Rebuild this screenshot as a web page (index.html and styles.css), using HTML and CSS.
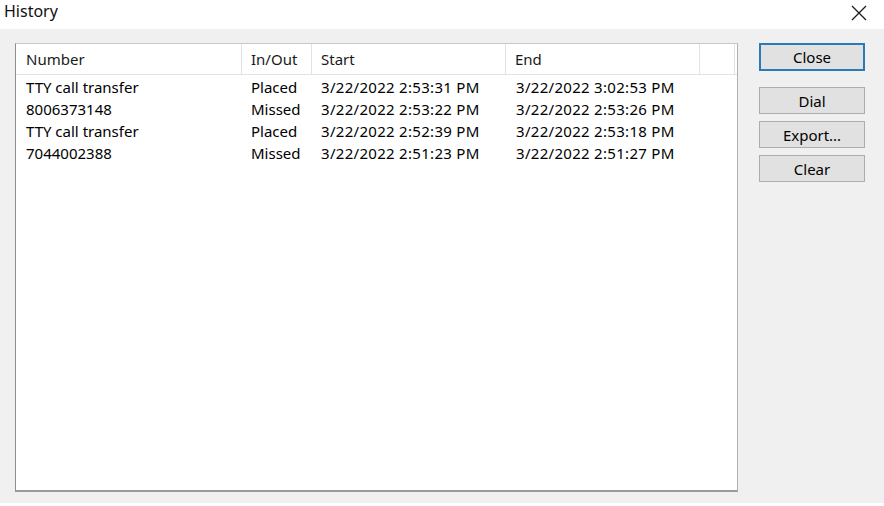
FILE: index.html
```html
<!DOCTYPE html>
<html>
<head>
<meta charset="utf-8">
<link rel="stylesheet" href="styles.css">
</head>
<body>
<div class="window">
  <div class="titlebar">
    <span class="title">History</span>
    <svg class="close-x" width="16" height="16" viewBox="0 0 16 16"><path d="M1 1 L15 15 M15 1 L1 15" stroke="#1a1a1a" stroke-width="1.3" fill="none"/></svg>
  </div>
  <div class="client">
    <div class="list">
      <div class="row header">
        <div class="cell c1">Number</div>
        <div class="cell c2">In/Out</div>
        <div class="cell c3">Start</div>
        <div class="cell c4">End</div>
        <div class="cell c5"></div>
      </div>
      <div class="rows">
        <div class="row">
          <div class="cell c1">TTY call transfer</div>
          <div class="cell c2">Placed</div>
          <div class="cell c3">3/22/2022 2:53:31 PM</div>
          <div class="cell c4">3/22/2022 3:02:53 PM</div>
        </div>
        <div class="row">
          <div class="cell c1">8006373148</div>
          <div class="cell c2">Missed</div>
          <div class="cell c3">3/22/2022 2:53:22 PM</div>
          <div class="cell c4">3/22/2022 2:53:26 PM</div>
        </div>
        <div class="row">
          <div class="cell c1">TTY call transfer</div>
          <div class="cell c2">Placed</div>
          <div class="cell c3">3/22/2022 2:52:39 PM</div>
          <div class="cell c4">3/22/2022 2:53:18 PM</div>
        </div>
        <div class="row">
          <div class="cell c1">7044002388</div>
          <div class="cell c2">Missed</div>
          <div class="cell c3">3/22/2022 2:51:23 PM</div>
          <div class="cell c4">3/22/2022 2:51:27 PM</div>
        </div>
      </div>
    </div>
    <div class="buttons">
      <button class="btn default">Close</button>
      <button class="btn gap">Dial</button>
      <button class="btn">Export...</button>
      <button class="btn">Clear</button>
    </div>
  </div>
</div>
</body>
</html>
```
FILE: styles.css
```css
html, body {
  margin: 0;
  padding: 0;
  background: #ffffff;
}
body {
  font-family: "Noto Sans", "Open Sans", sans-serif;
  font-size: 15px;
  color: #000;
}
.window {
  width: 884px;
  height: 506px;
  display: flex;
  flex-direction: column;
}
.titlebar {
  height: 29px;
  background: #fff;
  display: flex;
  align-items: center;
  justify-content: space-between;
  padding: 0 17px 0 4px;
  box-sizing: border-box;
}
.title {
  font-size: 16px;
  color: #111;
  position: relative;
  top: -4px;
}
.close-x {
  position: relative;
  top: -2px;
}
.client {
  height: 474px;
  background: #f0f0f0;
  display: flex;
  padding: 14px 0 0 15px;
  box-sizing: border-box;
}
.list {
  width: 723px;
  height: 449px;
  box-sizing: border-box;
  background: #fff;
  border-left: 1px solid #8e8e8e;
  border-top: 1px solid #c8c8c8;
  border-right: 1px solid #b0b0b0;
  border-bottom: 2px solid #9a9a9a;
}
.row {
  display: flex;
  height: 22px;
  line-height: 22px;
}
.row.header {
  height: 31px;
  line-height: 31px;
  border-bottom: 1px solid #e3e3e3;
  box-sizing: border-box;
  color: #1a1a1a;
}
.rows {
  padding-top: 1px;
}
.cell {
  box-sizing: border-box;
  white-space: nowrap;
  padding-left: 10px;
}
.rows .c3, .rows .c4 {
  letter-spacing: 0.3px;
}
.header .cell {
  border-right: 1px solid #e3e3e3;
  padding-left: 9px;
}
.header .c1 { padding-left: 10px; }
.c1 { width: 226px; }
.c2 { width: 70px; padding-left: 9px; }
.c3 { width: 194px; padding-left: 9px; }
.c4 { width: 194px; padding-left: 10px; }
.c5 { width: 35px; }
.buttons {
  display: flex;
  flex-direction: column;
  margin-left: 21px;
  gap: 7px;
}
.btn {
  width: 106px;
  height: 27px;
  background: #e1e1e1;
  border: 1px solid #adadad;
  font-family: "Noto Sans", "Open Sans", sans-serif;
  font-size: 15px;
  color: #000;
  padding: 0;
  margin: 0;
}
.btn.default {
  height: 28px;
  border: 2px solid #2a7ab8;
}
.btn.gap {
  margin-top: 9px;
}
```
